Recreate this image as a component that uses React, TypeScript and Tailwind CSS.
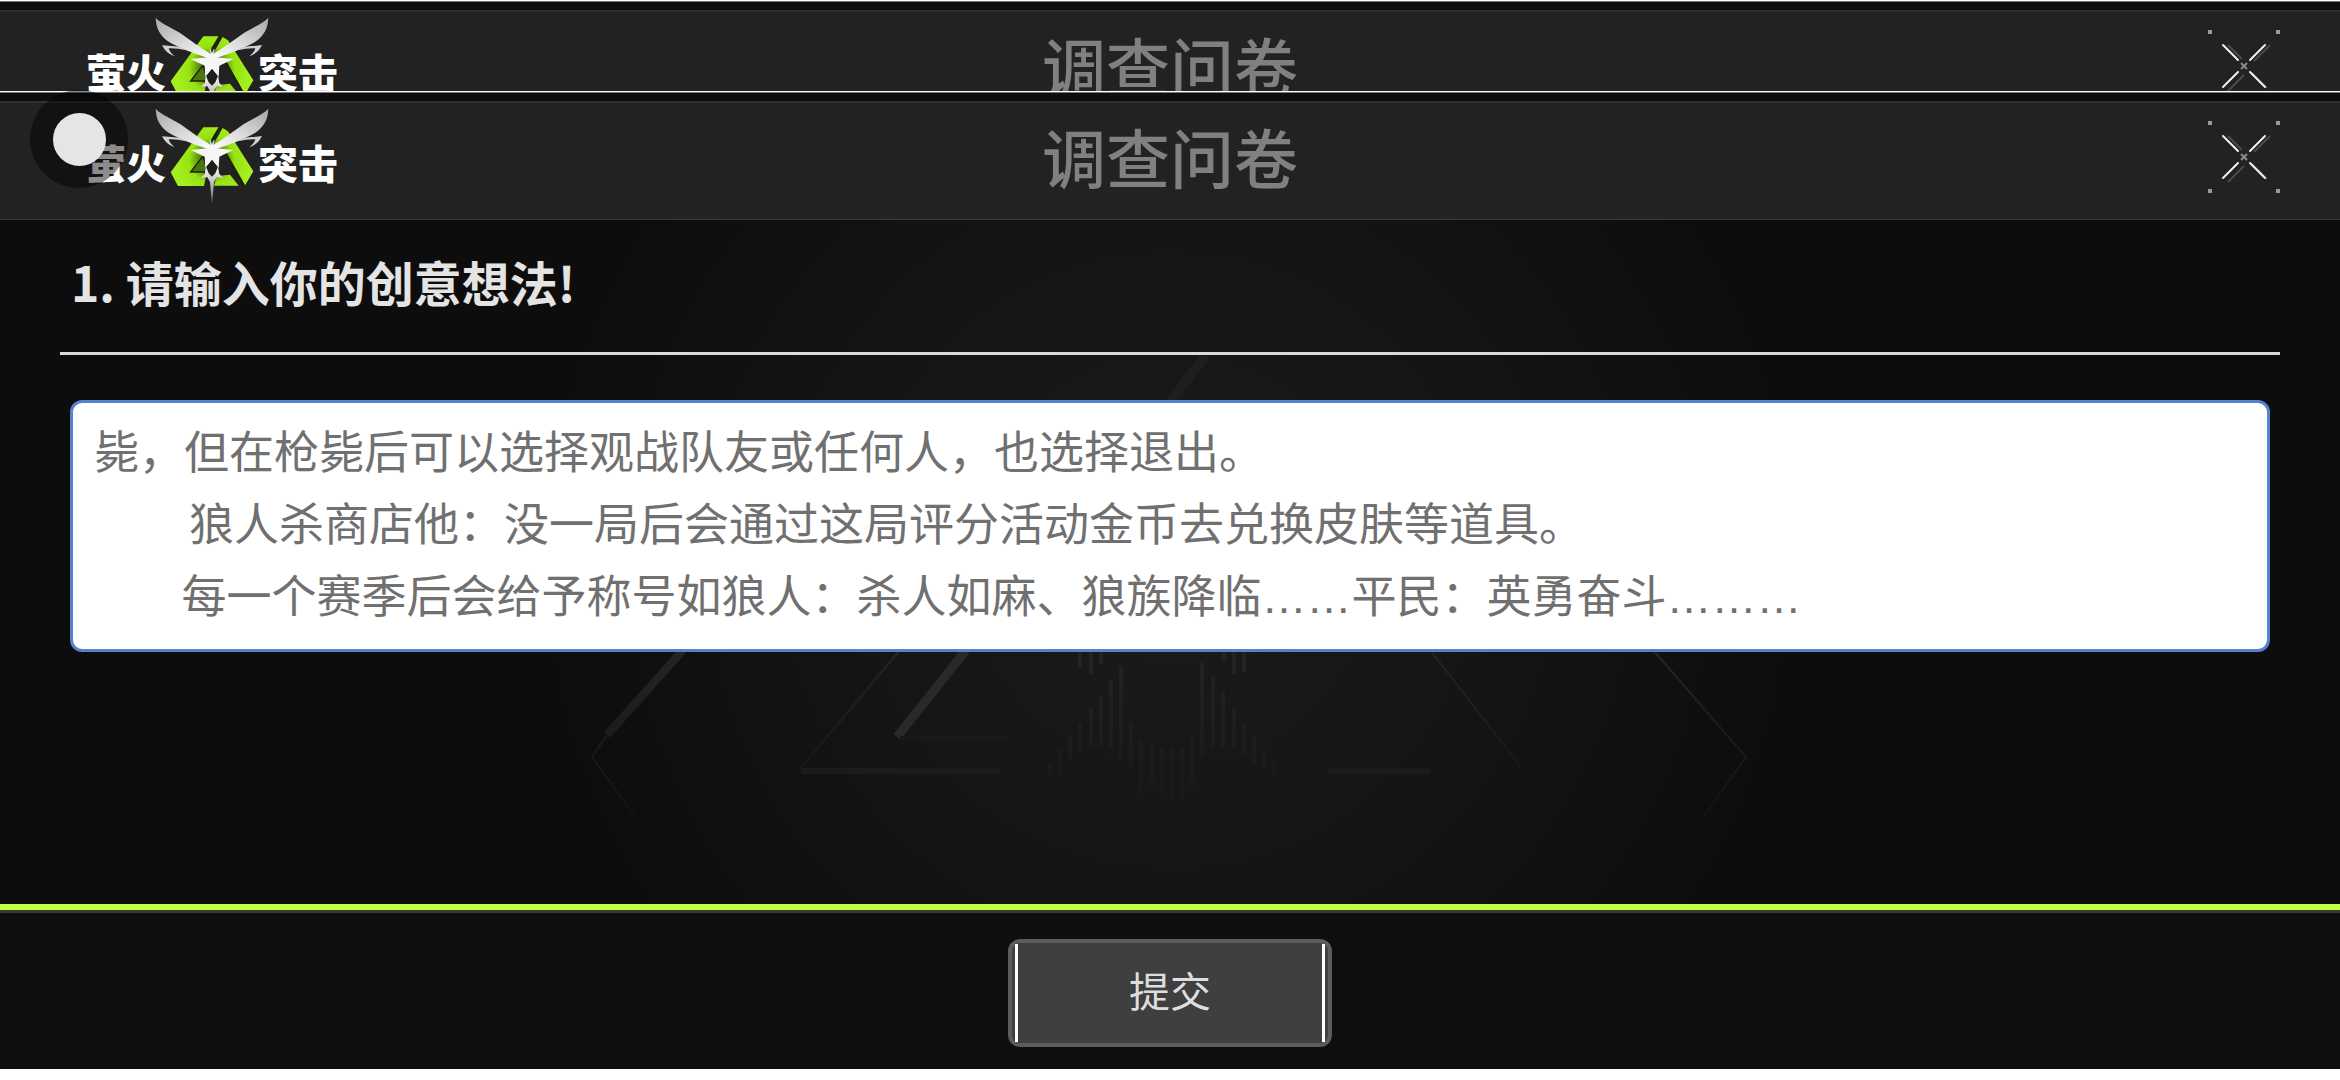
import React, { useState } from 'react';

const DEFAULT_ANSWER = [
    '毙，但在枪毙后可以选择观战队友或任何人，也选择退出。',
    '\u3000    狼人杀商店他：没一局后会通过这局评分活动金币去兑换皮肤等道具。',
    '       每一个赛季后会给予称号如狼人：杀人如麻、狼族降临……平民：英勇奋斗………',
].join('\n');

// Vertical strokes of the emblem: x, top, bottom
const EMBLEM_STROKES = [
    [1080, 652, 668], [1091, 652, 674], [1101, 652, 664],
    [1224, 652, 662], [1234, 652, 674], [1244, 652, 672],
    [1050, 764, 776], [1060, 750, 774], [1070, 736, 760], [1080, 723, 750],
    [1091, 708, 747], [1101, 695, 747], [1111, 680, 747], [1121, 667, 760],
    [1131, 723, 768], [1141, 740, 800], [1152, 747, 820], [1162, 747, 822],
    [1172, 747, 822], [1182, 747, 820], [1192, 736, 794], [1202, 663, 758],
    [1213, 676, 748], [1223, 692, 747], [1234, 708, 747], [1244, 723, 754],
    [1254, 736, 764], [1264, 750, 770], [1274, 763, 774],
];

const LogoMark: React.FC<{ id: string }> = ({ id }) => (
    <svg viewBox="12 24 348 294" className="-mx-3 h-[98px] w-[116px]" aria-hidden="true">
        <defs>
            <linearGradient id={`${id}-wing-l`} x1="0" y1="0" x2="1" y2="1">
                <stop offset="0" stopColor="#a8a8a8" />
                <stop offset="0.6" stopColor="#dedede" />
                <stop offset="1" stopColor="#ffffff" />
            </linearGradient>
            <linearGradient id={`${id}-wing-r`} x1="1" y1="0" x2="0" y2="1">
                <stop offset="0" stopColor="#a8a8a8" />
                <stop offset="0.6" stopColor="#dedede" />
                <stop offset="1" stopColor="#ffffff" />
            </linearGradient>
            <linearGradient id={`${id}-tail`} x1="0" y1="0" x2="0" y2="1">
                <stop offset="0" stopColor="#ffffff" />
                <stop offset="1" stopColor="#6b6b6b" />
            </linearGradient>
            <radialGradient id={`${id}-green`} gradientUnits="userSpaceOnUse" cx="186" cy="180" r="110">
                <stop offset="0.2" stopColor="#3c5c08" />
                <stop offset="0.62" stopColor="#96e212" />
                <stop offset="1" stopColor="#a4f01e" />
            </radialGradient>
        </defs>
        <path d="M160 82h48l-26 42-8 28-52 62h36l10 14-6 30H84L62 217z" fill={`url(#${id}-green)`} />
        <path d="M218 84l16 10 76 120-26 44-62-104-44 0 14-24z" fill={`url(#${id}-green)`} />
        <path d="M200 228l40-4 26 33h-74z" fill={`url(#${id}-green)`} />
        <path d="M122 216l36-46 18 46z" fill="#4d7412" stroke="#1b2607" strokeWidth="4" />
        <path d="M211 80l-24 40M222 152l60 106" stroke="#1b2409" strokeWidth="8" fill="none" />
        <path d="M183 150C142 136 84 116 56 98C30 80 18 58 17 26C32 44 72 58 102 80C132 102 162 122 184 136z" fill={`url(#${id}-wing-l)`} />
        <path d="M189 150C230 136 288 116 316 98C342 80 354 58 355 26C340 44 300 58 270 80C240 102 210 122 188 136z" fill={`url(#${id}-wing-r)`} />
        <path d="M36 108c14 4 40 0 62 10l12 6c-22-4-38-7-54-6 2 8 8 16 18 24-20-8-30-18-38-34z" fill="#d2d2d2" />
        <path d="M336 108c-14 4-40 0-62 10l-12 6c22-4 38-7 54-6-2 8-8 16-18 24 20-8 30-18 38-34z" fill="#d2d2d2" />
        <path d="M186 124l6 20 58 6-42 20-2 34-20-24-20 24-2-34-42-20 58-6z" fill="#f6f6f6" />
        <path d="M186 180l16 20-4 24-12 14-12-14-4-24z" fill="#1d1f18" />
        <path d="M168 200l8 20 10 10 10-10 8-20 4 22 12 12-20-2-8 14-6 66-6-66-8-14-20 2 12-12z" fill={`url(#${id}-tail)`} />
        <path d="M180 120l3 16M192 120l-3 16" stroke="#e8e8e8" strokeWidth="3" />
    </svg>
);

const CloseIcon: React.FC = () => (
    <svg viewBox="0 0 72 72" className="size-[72px]" fill="none" aria-hidden="true">
        <path d="M0 0h4v4h-4zM68 0h4v4h-4zM0 68h4v4h-4zM68 68h4v4h-4z" fill="#9a9a9a" />
        <path d="M20 15l14 14M62 15L46 31M20 61l16-16M44 43l15 15" stroke="#4a4a4a" strokeWidth="2" />
        <path d="M15 15l15 15M57 15L42 30M15 57l15-15M42 42l15 15" stroke="#f0f0f0" strokeWidth="2" strokeLinecap="round" />
        <path d="M33 33l6 6M39 33l-6 6" stroke="#8a8a8a" strokeWidth="2" />
    </svg>
);

const SurveyHeader: React.FC<{ id: string }> = ({ id }) => (
    <header className="border-t border-white bg-[#0e0e0e]">
        <div className="h-[9px] border-t border-[#777777]" />
        <div className="grid h-[119px] grid-cols-[1fr_auto_1fr] items-center border-t-2 border-b border-t-[#303030] border-b-[#3c3c3c] bg-[#222222] px-[60px] pb-2">
            {/* Logo */}
            <div className="flex items-center pl-[26px] text-[40px] leading-none font-black text-white">
                <span className="pt-4">萤火</span>
                <LogoMark id={id} />
                <span className="pt-4">突击</span>
            </div>
            <div className="pt-2 text-[64px] leading-none font-medium text-[#808080]">调查问卷</div>
            <button type="button" aria-label="关闭" className="justify-self-end">
                <CloseIcon />
            </button>
        </div>
    </header>
);

const Backdrop: React.FC = () => (
    <svg
        viewBox="0 220 2340 684"
        preserveAspectRatio="xMidYMid slice"
        className="absolute inset-0 h-full w-full"
        fill="none"
        aria-hidden="true"
    >
        <defs>
            <radialGradient id="glow" gradientUnits="userSpaceOnUse" cx="1170" cy="560" r="620">
                <stop offset="0" stopColor="#1b1b1b" />
                <stop offset="0.5" stopColor="#151515" />
                <stop offset="1" stopColor="#0d0d0d" />
            </radialGradient>
            <linearGradient id="fade" gradientUnits="userSpaceOnUse" x1="0" y1="640" x2="0" y2="830">
                <stop offset="0" stopColor="#262626" />
                <stop offset="1" stopColor="#111111" />
            </linearGradient>
            <linearGradient id="strokes" gradientUnits="userSpaceOnUse" x1="0" y1="650" x2="0" y2="830">
                <stop offset="0" stopColor="#242424" />
                <stop offset="1" stopColor="#151515" />
            </linearGradient>
        </defs>
        <rect y="220" width="2340" height="684" fill="url(#glow)" />
        <g stroke="url(#fade)">
            <path d="M683 650L607 735" strokeWidth="8" />
            <path d="M607 735L592 757L639 822M1653 650L1746 757L1699 823" strokeWidth="2" />
            <path d="M900 650L801 768M1430 650L1521 767" strokeWidth="2" />
        </g>
        <path d="M966 650L897 737" stroke="#292929" strokeWidth="9" />
        <path d="M1206 355L1170 402" stroke="#1e1e1e" strokeWidth="10" />
        <path d="M801 771H1000M1327 771H1430" stroke="#1b1b1b" strokeWidth="6" />
        <path d="M900 738H1010" stroke="#191919" strokeWidth="4" />
        {EMBLEM_STROKES.map(([x, top, bottom]) => (
            <path key={`${x}-${top}`} d={`M${x} ${top}V${bottom}`} stroke="url(#strokes)" strokeWidth="4" />
        ))}
    </svg>
);

const App: React.FC = () => {
    const [answer, setAnswer] = useState(DEFAULT_ANSWER);

    return (
        <div
            lang="zh-CN"
            className="relative flex min-h-screen flex-col bg-white pb-[11px] font-['Liberation_Sans','Noto_Sans_CJK_SC',sans-serif]"
        >
            {/* Host page header, partly covered by the survey panel */}
            <div className="h-[91px] overflow-hidden">
                <SurveyHeader id="host" />
            </div>
            <SurveyHeader id="survey" />

            <main className="relative flex-1 bg-[#0d0d0d] px-[60px] pt-[25px]">
                <Backdrop />
                <div className="relative">
                    <h1
                        id="question"
                        className="border-b-[3px] border-[#dadad8] px-[11px] pb-[35px] font-['Noto_Sans_CJK_SC',sans-serif] text-5xl leading-[72px] font-bold text-[#e4e4e4]"
                    >
                        1. 请输入你的创意想法!
                    </h1>
                    <div className="mx-[10px] mt-[45px]">
                        <textarea
                            aria-labelledby="question"
                            rows={3}
                            value={answer}
                            onChange={(e) => setAnswer(e.target.value)}
                            className="block w-full resize-none overflow-hidden rounded-xl border-[3px] border-[#5582cc] bg-white px-[21px] pt-[15px] pb-[15px] text-[45px] leading-[72px] text-[#707070] outline-none"
                        />
                    </div>
                </div>
            </main>

            <footer className="border-t-[6px] border-[#c0ff48] bg-[#0e0e0e]">
                <div className="flex justify-center border-t-[3px] border-[#363c2c] pt-[26px] pb-[22px]">
                    <button
                        type="button"
                        className="flex h-[108px] w-[324px] items-stretch justify-between rounded-xl border-4 border-[#5c5c5c] bg-[#3f3f3f] px-[3px] py-px text-[#dedede]"
                    >
                        <span className="w-[3px] bg-white" />
                        <span className="self-center text-[41px] leading-none">提交</span>
                        <span className="w-[3px] bg-white" />
                    </button>
                </div>
            </footer>

            {/* Floating assist ball */}
            <button
                type="button"
                aria-label="悬浮球"
                className="absolute top-[90px] left-[30px] flex size-[98px] items-center justify-center rounded-full bg-black/45"
            >
                <span className="size-[53px] rounded-full bg-[#e5e5e5]" />
            </button>
        </div>
    );
};

export default App;
